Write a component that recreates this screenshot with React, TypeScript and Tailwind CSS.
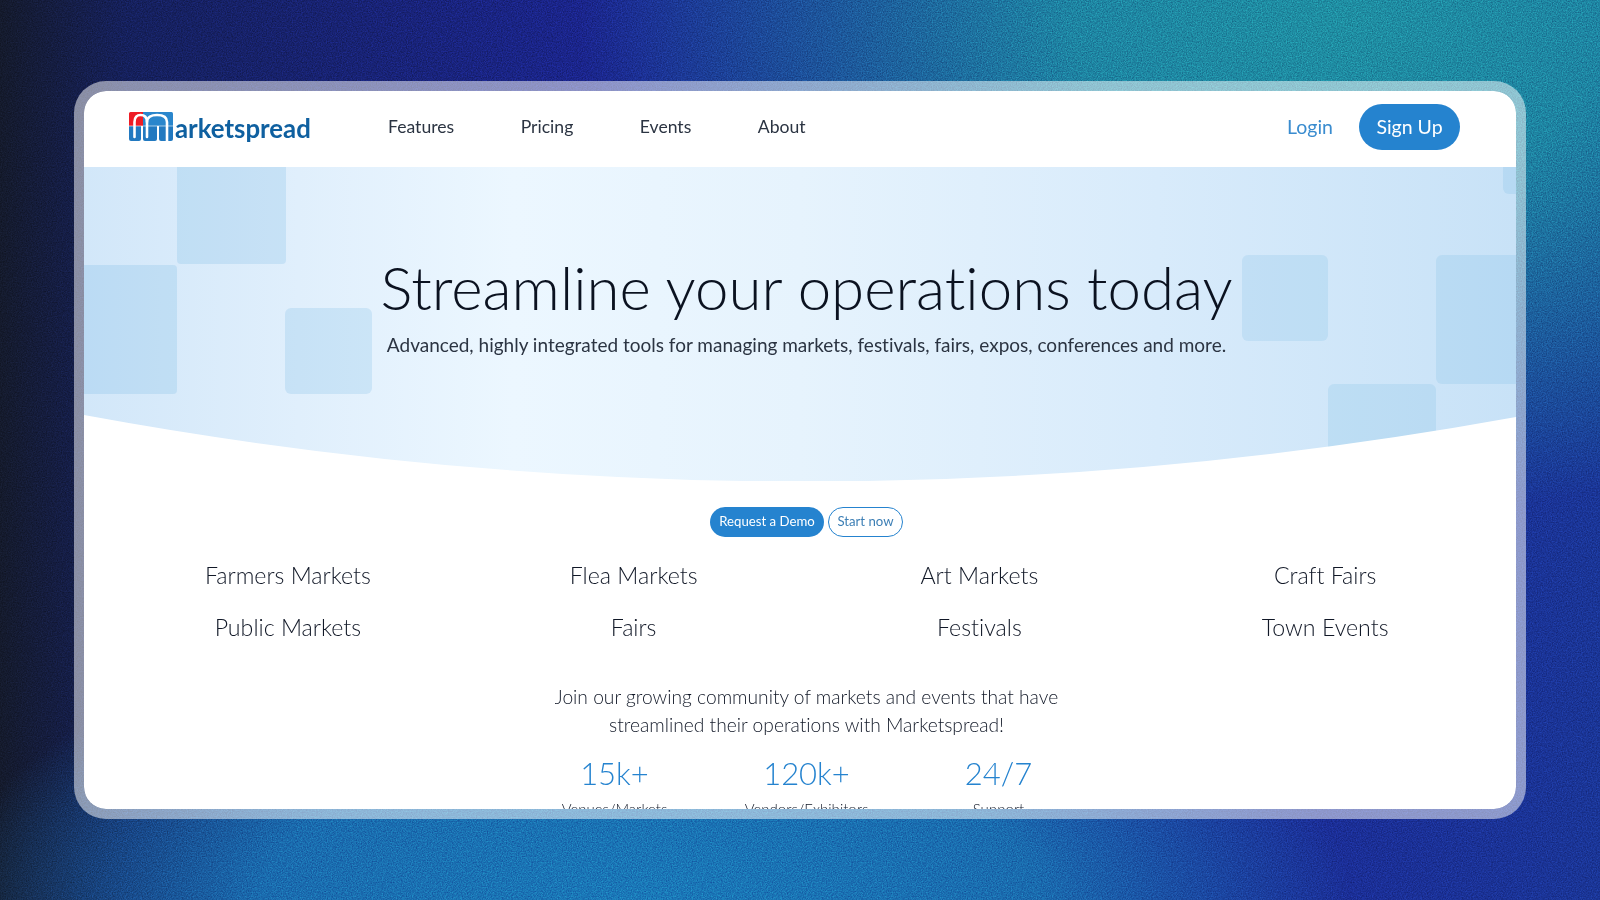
const NUNITO = "font-['Lato','Noto_Sans',sans-serif] [font-variant-ligatures:none]"

const cities = [
  "Farmers Markets",
  "Flea Markets",
  "Art Markets",
  "Craft Fairs",
  "Public Markets",
  "Fairs",
  "Festivals",
  "Town Events",
]

const stats = [
  { value: "15k+", label: "Venues/Markets" },
  { value: "120k+", label: "Vendors/Exhibitors" },
  { value: "24/7", label: "Support" },
]

function LogoMark() {
  return (
    <svg width="44" height="30" viewBox="0 0 44 30" className="shrink-0">
      <path d="M0 1.5A1.5 1.5 0 0 1 1.5 0H14V14H0Z" fill="#ee1c25" />
      <path d="M14 0H42.5A1.5 1.5 0 0 1 44 1.5V14H14Z" fill="#2a86cc" />
      {/* lower row: three blue u shapes */}
      <path d="M0 14H12V27a2 2 0 0 1-2 2H2a2 2 0 0 1-2-2Z" fill="#2279c0" />
      <path d="M14 14H28V27a2 2 0 0 1-2 2H16a2 2 0 0 1-2-2Z" fill="#2279c0" />
      <path d="M30 14H44V27a2 2 0 0 1-2 2H32a2 2 0 0 1-2-2Z" fill="#2279c0" />
      <g fill="none" stroke="#fff" strokeLinecap="round">
        <path d="M5.5 25V10C5.5 5 8 3 11.5 3S18 5 18 10V25" strokeWidth="2.6" />
        <path d="M18 10C18 5 22.5 3 28 3S38 5 38 10V29" strokeWidth="2.6" />
        <path d="M0 14H44" strokeWidth="0.6" />
      </g>
    </svg>
  )
}

export default function App() {
  return (
    <div className="relative flex h-[900px] w-full items-center justify-center overflow-hidden bg-[radial-gradient(ellipse_760px_500px_at_1340px_20px,#1f8ea2_0%,#1e84a2_35%,transparent_100%),radial-gradient(ellipse_700px_300px_at_650px_900px,#1a78b8_0%,#1a6bae_55%,transparent_100%),linear-gradient(90deg,#141a2c_0%,#15205c_8%,#1b2591_40%,#1b2a96_75%,#1a3596_100%)]">
      {/* grain over the backdrop */}
      <svg className="absolute inset-0 h-full w-full opacity-30 mix-blend-overlay" aria-hidden="true">
        <filter id="grain" colorInterpolationFilters="sRGB">
          <feTurbulence type="fractalNoise" baseFrequency="0.8" numOctaves="2" stitchTiles="stitch" />
          <feColorMatrix type="matrix" values="1.4 0 0 0 -0.2 1.4 0 0 0 -0.2 1.4 0 0 0 -0.2 0 0 0 0 1" />
          <feColorMatrix type="saturate" values="0" />
        </filter>
        <rect width="100%" height="100%" filter="url(#grain)" />
      </svg>

      <div className="relative h-[738px] w-[1452px] overflow-hidden rounded-[32px] border-[10px] border-white/50 bg-white bg-clip-padding">
        {/* Nav */}
        <nav className={`flex h-[76px] items-center justify-between pb-[4px] pl-[45px] pr-[56px] text-[#2b3442] ${NUNITO}`}>
          <div className="flex items-center gap-[77px]">
            <a className="flex w-[182px] items-end gap-[2px]">
              <LogoMark />
              <span className="text-[25.8px] font-bold leading-[28px] text-[#0f60a0]">arketspread</span>
            </a>
            <ul className="flex gap-[66.5px] text-[17.6px]">
              <li>Features</li>
              <li>Pricing</li>
              <li>Events</li>
              <li>About</li>
            </ul>
          </div>
          <div className="flex items-center gap-[26px]">
            <a className="text-[19.5px] text-[#3a8ccf]">Login</a>
            <button className="h-[46px] w-[101px] rounded-full bg-[#2583cf] text-[19.5px] text-white">Sign Up</button>
          </div>
        </nav>

        {/* Hero */}
        <section className="relative h-[314px] overflow-hidden bg-[linear-gradient(90deg,#d2e7f9_0%,#e0effc_15%,#ecf7ff_30%,#e6f3fd_50%,#d8ebfb_75%,#c8e2f7_100%)]">
          <div className="absolute left-[93px] top-0 h-[97px] w-[109px] rounded-b-sm bg-[#3b9ad9]/15" />
          <div className="absolute left-0 top-[98px] h-[129px] w-[93px] rounded-r-sm bg-[#3b9ad9]/15" />
          <div className="absolute left-[201px] top-[141px] h-[86px] w-[87px] rounded-md bg-[#3b9ad9]/15" />
          <div className="absolute left-[1158px] top-[88px] h-[86px] w-[86px] rounded-md bg-[#3b9ad9]/12" />
          <div className="absolute left-[1352px] top-[88px] h-[129px] w-[80px] rounded-l-md bg-[#3b9ad9]/12" />
          <div className="absolute left-[1244px] top-[217px] h-[97px] w-[108px] rounded-t-md bg-[#3b9ad9]/12" />
          <div className="absolute left-[1419px] top-0 h-[27px] w-[13px] rounded-bl-md bg-[#3b9ad9]/12" />
          <svg
            viewBox="0 0 1432 66"
            width="1432"
            height="66"
            preserveAspectRatio="none"
            className="absolute bottom-0 left-0"
          >
            <path d="M0 0Q716 132 1432 2V66H0Z" fill="#fff" />
          </svg>
          <div className={`relative pl-[13px] pt-[81px] text-center ${NUNITO}`}>
            <h1 className="text-[60px] font-light leading-[78px] text-[#0b1220]">Streamline your operations today</h1>
            <p className="mt-[4px] text-[19px] leading-[30px] text-[#2b3442]">
              Advanced, highly integrated tools for managing markets, festivals, fairs, expos, conferences and more.
            </p>
          </div>
        </section>

        {/* Body */}
        <section className={`pl-[31px] pr-[18px] pt-[26px] text-center text-[#111827] ${NUNITO}`}>
          <div className="flex justify-center gap-[4px] text-[13.2px]">
            <button className="h-[30px] w-[114px] rounded-full bg-[#2583cf] text-white">Request a Demo</button>
            <button className="h-[30px] w-[75px] rounded-full border border-[#2583cf] text-[#3d7fb5]">Start now</button>
          </div>
          <div className="mt-[23px] grid grid-cols-4 gap-y-[21px] text-[23.2px] font-light leading-[31px]">
            {cities.map((c) => (
              <div key={c}>{c}</div>
            ))}
          </div>
          <p className="mx-auto mt-[40px] w-[560px] text-[19.2px] font-light leading-[28px]">
            Join our growing community of markets and events that have streamlined their operations with Marketspread!
          </p>
          <div className="mt-[14px] flex justify-center">
            {stats.map((s) => (
              <div key={s.label} className="w-[192px]">
                <div className="text-[31px] font-light leading-[40px] text-[#2583cf]">{s.value}</div>
                <div className="mt-[6px] text-[15px] font-light leading-[20px]">{s.label}</div>
              </div>
            ))}
          </div>
        </section>
      </div>
    </div>
  )
}
